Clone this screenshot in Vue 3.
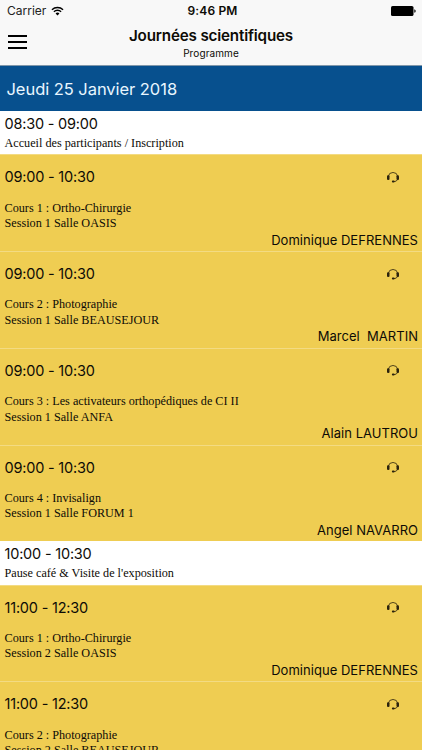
<template>
  <div class="screen">
    <header class="header">
      <div class="status-bar">
        <div class="carrier">
          <span>Carrier</span>
          <svg class="wifi" viewBox="0 0 14 10">
            <path d="M1 3.6a8.6 8.6 0 0 1 12 0" />
            <path d="M3.1 5.8a5.6 5.6 0 0 1 7.8 0" />
            <path class="wifi-dot" d="M7 9.8 4.9 7.6a3 3 0 0 1 4.2 0z" />
          </svg>
        </div>
        <span class="clock">9:46 PM</span>
        <svg class="battery" viewBox="0 0 25 10">
          <rect x="0" y="0" width="22.5" height="10" rx="1.6" />
          <path d="M23.3 3.2q1.4.4 1.4 1.8t-1.4 1.8z" />
        </svg>
      </div>
      <div class="nav-bar">
        <button class="menu-button" aria-label="Menu" @click="toggleMenu">
          <span></span>
          <span></span>
          <span></span>
        </button>
        <div class="titles">
          <h1 class="title">Journées scientifiques</h1>
          <p class="subtitle">Programme</p>
        </div>
      </div>
    </header>

    <h2 class="day">Jeudi 25 Janvier 2018</h2>

    <ul class="list">
      <li
        v-for="(item, index) in items"
        :key="index"
        :class="item.room ? 'course' : 'break'"
      >
        <div class="row">
          <span class="time">{{ item.time }}</span>
          <svg v-if="item.room" class="headset" viewBox="0 0 12 12">
            <path class="band" d="M1.3 5.4a4.75 4.6 0 0 1 9.4 0" />
            <rect x="0" y="4.2" width="2.5" height="4.8" rx="1.1" />
            <rect x="9.5" y="4.2" width="2.5" height="4.8" rx="1.1" />
            <path class="arm" d="M10.5 8.6Q9.7 10.6 7 10.6" />
            <rect x="4.9" y="9.6" width="2.7" height="1.8" rx="0.9" />
          </svg>
        </div>
        <p class="description">{{ item.title }}</p>
        <p v-if="item.room" class="description">{{ item.room }}</p>
        <p v-if="item.speaker" class="speaker">{{ item.speaker }}</p>
      </li>
    </ul>
  </div>
</template>

<script setup>
import { ref } from 'vue';

const isMenuOpen = ref(false);
const toggleMenu = () => isMenuOpen.value = !isMenuOpen.value;

const items = [
  { time: '08:30 - 09:00', title: 'Accueil des participants / Inscription' },
  { time: '09:00 - 10:30', title: 'Cours 1 : Ortho-Chirurgie', room: 'Session 1 Salle OASIS', speaker: 'Dominique DEFRENNES' },
  { time: '09:00 - 10:30', title: 'Cours 2 : Photographie', room: 'Session 1 Salle BEAUSEJOUR', speaker: 'Marcel  MARTIN' },
  { time: '09:00 - 10:30', title: 'Cours 3 : Les activateurs orthopédiques de CI II', room: 'Session 1 Salle ANFA', speaker: 'Alain LAUTROU' },
  { time: '09:00 - 10:30', title: 'Cours 4 : Invisalign', room: 'Session 1 Salle FORUM 1', speaker: 'Angel NAVARRO' },
  { time: '10:00 - 10:30', title: "Pause café & Visite de l'exposition" },
  { time: '11:00 - 12:30', title: 'Cours 1 : Ortho-Chirurgie', room: 'Session 2 Salle OASIS', speaker: 'Dominique DEFRENNES' },
  { time: '11:00 - 12:30', title: 'Cours 2 : Photographie', room: 'Session 2 Salle BEAUSEJOUR' },
];
</script>

<style>
body {
  margin: 0;
  overflow: hidden;
}
</style>

<style scoped>
.screen {
  height: 750px;
  overflow: hidden;
  background: #fff;
  color: #0d0b06;
  font-family: Inter, "Liberation Sans", sans-serif;
}

h1, h2, p, ul {
  margin: 0;
  padding: 0;
  font-weight: normal;
}

.header {
  height: 66px;
  background: #f8f8f8;
  border-bottom: 1px solid #8097aa;
  box-sizing: border-box;
}

.status-bar {
  display: grid;
  grid-template-columns: 1fr auto 1fr;
  align-items: center;
  height: 21px;
  padding: 0 6px 0 7px;
  font-size: 12px;
}

.carrier {
  display: flex;
  align-items: center;
  gap: 5px;
  color: #222;
}

.wifi {
  width: 13px;
  height: 10px;
  fill: none;
  stroke: #000;
  stroke-width: 1.5;
}
.wifi-dot {
  fill: #000;
  stroke: none;
}

.clock {
  padding-left: 2px;
  font-weight: 600;
  letter-spacing: 0.15px;
}

.battery {
  justify-self: end;
  width: 25px;
  height: 10px;
}

.nav-bar {
  display: grid;
  grid-template-columns: 40px 1fr 40px;
  height: 43px;
}

.menu-button {
  display: flex;
  flex-direction: column;
  gap: 4px;
  width: 27px;
  padding: 14px 0 0 8px;
  border: 0;
  background: none;
}
.menu-button span {
  height: 2px;
  background: #000;
}

.titles {
  text-align: center;
}

.title {
  padding-top: 5px;
  font-size: 15.2px;
  font-weight: 600;
  letter-spacing: -0.17px;
  line-height: 20px;
}

.subtitle {
  font-size: 10px;
  letter-spacing: 0.1px;
  line-height: 14px;
}

.day {
  height: 45px;
  padding-left: 6.5px;
  background: #07508e;
  color: #e9f6ff;
  font-size: 16.5px;
  letter-spacing: -0.05px;
  line-height: 46px;
  box-sizing: border-box;
}

.list {
  list-style: none;
}

.break {
  height: 43.3px;
  padding: 3px 4.5px 0;
  box-sizing: border-box;
}

.course {
  height: 96.75px;
  padding: 12px 4px 0 4.5px;
  background: #efcd52;
  border-top: 1px solid #f3db83;
  box-sizing: border-box;
}

.row {
  display: flex;
  justify-content: space-between;
  height: 20px;
}

.time {
  font-size: 14.5px;
  letter-spacing: -0.2px;
  line-height: 20px;
}

.headset {
  width: 12px;
  height: 12px;
  margin: 3.5px 19px 0 0;
  fill: #2b220d;
}
.band, .arm {
  fill: none;
  stroke: #2b220d;
  stroke-width: 0.8;
}

.description {
  font-family: "Liberation Serif", serif;
  font-size: 12.2px;
  line-height: 15.5px;
  white-space: nowrap;
}
.break .description {
  padding-top: 2px;
}
.course .row + .description {
  padding-top: 13.4px;
}

.speaker {
  font-size: 13px;
  letter-spacing: 0.03px;
  line-height: 17px;
  text-align: right;
  white-space: pre;
}
</style>
